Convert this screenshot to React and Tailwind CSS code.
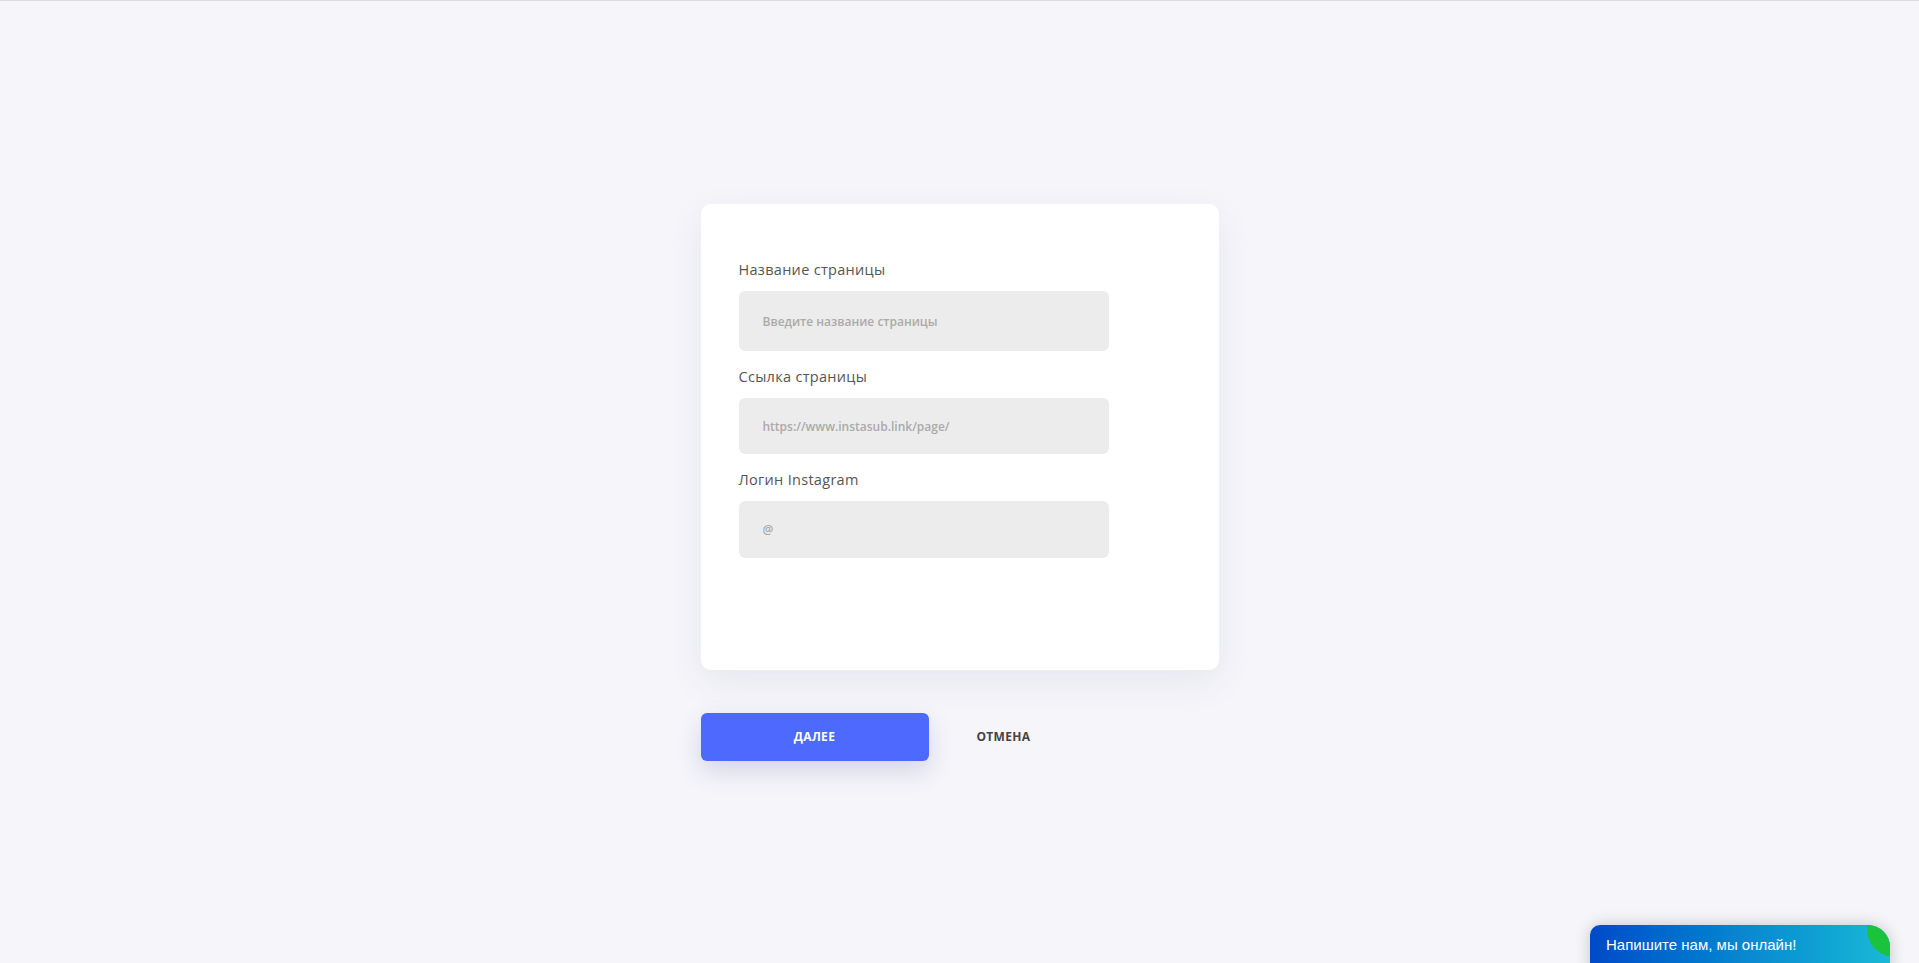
import React from "react";

const fields = [
  { label: "Название страницы", placeholder: "Введите название страницы", h: "h-[60px]" },
  { label: "Ссылка страницы", placeholder: "https://www.instasub.link/page/", h: "h-[56px]" },
  { label: "Логин Instagram", placeholder: "@", h: "h-[57px]" },
];

const App = () => {
  return (
    <div className="min-h-screen bg-[#f5f5fa] border-t border-[#dcdbe3] font-['Open_Sans',sans-serif] relative overflow-hidden">
      <div className="mx-auto w-[518px] pt-[203px]">
        {/* Card */}
        <div className="bg-white rounded-[10px] shadow-[0_12px_36px_rgba(60,60,110,0.08)] pl-[38px] pt-[56px] pb-[112px]">
          {fields.map((f, i) => (
            <div key={f.label} className={i > 0 ? "mt-[16px]" : ""}>
              <label className="block text-[14.5px] leading-[20px] font-medium text-[#555] tracking-[0.3px]">
                {f.label}
              </label>
              <input
                placeholder={f.placeholder}
                className={`mt-[11px] w-[370px] ${f.h} bg-[#ececec] rounded-[6px] px-[24px] text-[12px] font-semibold text-[#555] placeholder:text-[#aaa] outline-none`}
              />
            </div>
          ))}
        </div>

        {/* Buttons */}
        <div className="flex items-center mt-[43px] gap-[48px]">
          <button className="w-[228px] h-[48px] bg-[#4d69fe] rounded-[6px] text-white text-[12px] font-bold uppercase tracking-[0.3px] shadow-[0_10px_24px_rgba(60,70,140,0.18)]">
            Далее
          </button>
          <button className="text-[12px] font-bold uppercase text-[#444] tracking-[0.3px]">
            Отмена
          </button>
        </div>
      </div>

      {/* Chat widget */}
      <div className="absolute left-[1590px] top-[924px] w-[300px] h-[50px] rounded-tl-[10px] rounded-tr-[22px] overflow-hidden bg-gradient-to-r from-[#0049c8] via-[#0a86d0] to-[#1ab9d6] shadow-[0_0_16px_rgba(0,0,0,0.2)]">
        <div className="absolute -right-[33px] -top-[40px] w-[56px] h-[72px] rounded-full bg-[#1bc23c]" />
        <div className="relative pl-[16px] pt-[10px] text-white text-[15px] font-['Liberation_Sans',sans-serif] leading-[20px]">
          Напишите нам, мы онлайн!
        </div>
      </div>
    </div>
  );
};

export default App;
